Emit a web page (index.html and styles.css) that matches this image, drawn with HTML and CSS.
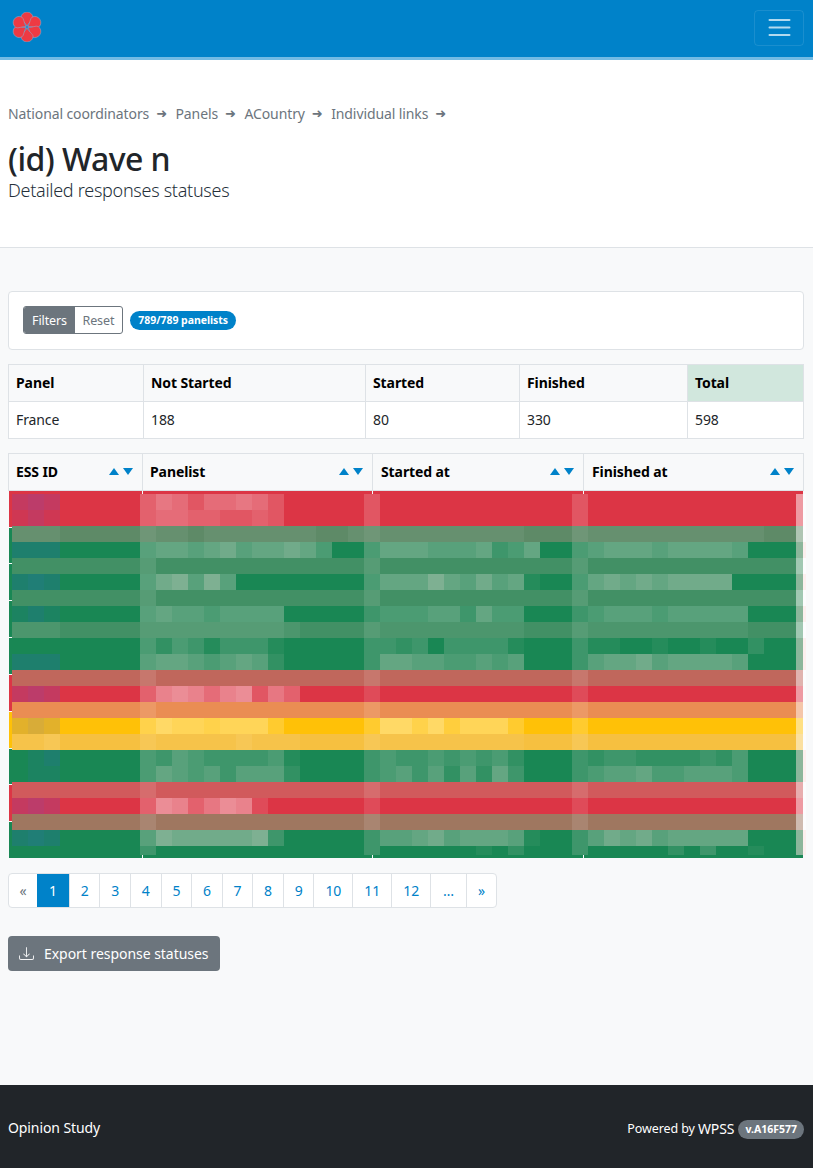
FILE: index.html
```html
<!DOCTYPE html>
<html lang="en">
<head>
<meta charset="utf-8">
<title>Detailed responses statuses</title>
<link rel="stylesheet" href="styles.css">
</head>
<body>
<nav class="navbar">
  <svg class="logo" viewBox="-16 -16 32 32" width="30" height="30" aria-hidden="true">
    <g class="petals">
      <path id="p" d="M0 -1C-2 -5 -6.4 -7.5 -6.4 -10A6.4 6 0 0 1 6.4 -10C6.4 -7.5 2 -5 0 -1Z"/>
      <use href="#p" transform="rotate(60)"/>
      <use href="#p" transform="rotate(120)"/>
      <use href="#p" transform="rotate(180)"/>
      <use href="#p" transform="rotate(240)"/>
      <use href="#p" transform="rotate(300)"/>
    </g>
  </svg>
  <button class="toggler" aria-label="Menu">
    <svg viewBox="0 0 30 30" width="30" height="30" aria-hidden="true"><path d="M5.5 7h20M5.5 14.5h20M5.5 22h20"/></svg>
  </button>
</nav>

<header class="hero">
  <ol class="crumbs">
    <li>National coordinators</li>
    <li>Panels</li>
    <li>ACountry</li>
    <li>Individual links</li>
  </ol>
  <h1>(id) Wave n</h1>
  <p class="sub">Detailed responses statuses</p>
</header>

<main class="content">
  <section class="card">
    <div class="btn-group"><span class="seg seg-on">Filters</span><span class="seg seg-off">Reset</span></div>
    <span class="pill">789/789 panelists</span>
  </section>

  <table class="grid summary">
    <thead>
      <tr><th class="s1">Panel</th><th class="s2">Not Started</th><th class="s3">Started</th><th class="s4">Finished</th><th class="total">Total</th></tr>
    </thead>
    <tbody>
      <tr><td>France</td><td>188</td><td>80</td><td>330</td><td>598</td></tr>
    </tbody>
  </table>

  <div class="results">
    <table class="grid head">
      <thead>
        <tr>
          <th class="c1"><div class="th"><span>ESS ID</span><span class="sort"><i class="up"></i><i class="down"></i></span></div></th>
          <th class="c2"><div class="th"><span>Panelist</span><span class="sort"><i class="up"></i><i class="down"></i></span></div></th>
          <th class="c3"><div class="th"><span>Started at</span><span class="sort"><i class="up"></i><i class="down"></i></span></div></th>
          <th class="c4"><div class="th"><span>Finished at</span><span class="sort"><i class="up"></i><i class="down"></i></span></div></th>
        </tr>
      </thead>
    </table>
    <div id="mosaic" class="mosaic"></div>
  </div>

  <ul class="pager">
    <li class="first">«</li><li class="on">1</li><li>2</li><li>3</li><li>4</li><li>5</li><li>6</li><li>7</li><li>8</li><li>9</li><li class="wide">10</li><li class="wide">11</li><li class="wide">12</li><li class="more">…</li><li class="last">»</li>
  </ul>

  <button class="export">
    <svg viewBox="0 0 16 16" width="15" height="15" aria-hidden="true">
      <path d="M.5 9.9a.5.5 0 0 1 .5.5v2.5a1 1 0 0 0 1 1h12a1 1 0 0 0 1-1v-2.5a.5.5 0 0 1 1 0v2.5a2 2 0 0 1-2 2H2a2 2 0 0 1-2-2v-2.5a.5.5 0 0 1 .5-.5z"/>
      <path d="M7.646 11.854a.5.5 0 0 0 .708 0l3-3a.5.5 0 0 0-.708-.708L8.5 10.293V1.5a.5.5 0 0 0-1 0v8.793L5.354 8.146a.5.5 0 1 0-.708.708l3 3z"/>
    </svg>
    Export response statuses
  </button>
</main>

<footer class="footer">
  <span class="brand">Opinion Study</span>
  <span class="powered">Powered by <span class="wpss">WPSS</span><span class="version">v.A16F577</span></span>
</footer>
<script src="mosaic.js"></script>
</body>
</html>
```
FILE: styles.css
```css
* { box-sizing: border-box; }
html, body { margin: 0; padding: 0; }
body {
  min-height: 1168px;
  display: flex;
  flex-direction: column;
  background: #f8f9fa;
  color: #212529;
  font: 14px/20px "Noto Sans", sans-serif;
  letter-spacing: -0.1px;
}
.navbar {
  height: 60px;
  background: #0082c9;
  border-bottom: 3px solid #72bbe4;
  padding: 10px 9px 0 12px;
  display: flex;
  justify-content: space-between;
  align-items: flex-start;
}
.logo { display: block; margin-top: 2px; }
.petals path, .petals use { fill: #ee3a43; stroke: #8fb4d6; stroke-width: .5; }
.toggler {
  width: 50px; height: 36px; padding: 2px 9px;
  background: none;
  border: 1px solid rgba(255,255,255,.1);
  border-radius: 4px;
  display: block;
}
.toggler svg { display: block; }
.toggler path { stroke: rgba(255,255,255,.7); stroke-width: 2; stroke-linecap: round; fill: none; }

.hero {
  height: 188px;
  background: #fff;
  border-bottom: 1px solid #dee2e6;
  padding: 44px 8px 0;
}
.crumbs {
  list-style: none; margin: 0; padding: 0;
  display: flex;
  color: #6c757d;
  height: 20px;
}
.crumbs li { display: flex; }
.crumbs li::after {
  content: "➜";
  font-family: "DejaVu Sans", sans-serif;
  font-size: 13px;
  color: #6c757d;
  margin: 0 8.5px 0 7px;
}
h1 {
  margin: 16px 0 0;
  font-size: 32px;
  line-height: 38px;
  font-weight: 550;
  letter-spacing: -0.55px;
}
.sub {
  margin: 1px 0 0;
  font-size: 18px;
  line-height: 23px;
  font-weight: 300;
  color: #25303a;
  letter-spacing: -0.28px;
}

.content { flex: 1; padding: 43px 9px 0 8px; }
.card {
  height: 59px;
  background: #fff;
  border: 1px solid #dee2e6;
  border-radius: 4px;
  padding: 14px;
  display: flex;
  align-items: flex-start;
  gap: 7px;
  margin-bottom: 14px;
}
.btn-group {
  display: flex;
  height: 28px;
  border: 1px solid #6c757d;
  border-radius: 3px;
  overflow: hidden;
  font-size: 12.5px;
  line-height: 27px;
  color: #6c757d;
  background: #fff;
}
.seg { padding: 0 8px; }
.seg-on { background: #6c757d; color: #fff; }
.seg-off { padding: 0 8px 0 7.5px; }
.pill {
  height: 19px;
  margin-top: 5px;
  padding: 0 8px;
  border-radius: 10px;
  background: #0082c9;
  color: #fff;
  font-size: 10.5px;
  line-height: 18px;
  font-weight: 700;
  white-space: nowrap;
  letter-spacing: -0.05px;
}

.grid { border-collapse: collapse; table-layout: fixed; width: 796px; }
.grid th, .grid td {
  border: 1px solid #dee2e6;
  padding: 8px 7px;
  text-align: left;
  height: 36px;
  font-weight: 400;
}
.grid th { background: #f8f9fa; font-weight: 700; color: #000; }
.grid td { background: #fff; }
.summary { margin-bottom: 14px; }
.s1 { width: 135px; }
.s2 { width: 222px; }
.s3 { width: 154px; }
.s4 { width: 168px; }
.grid th.total { background: #d1e7dd; }
.c1 { width: 134px; }
.c2 { width: 230px; }
.c3 { width: 211px; }
.grid.head th { height: 37px; padding-top: 7px; padding-bottom: 8px; }
.grid.head .c3, .grid.head .c4 { padding-left: 8px; }
.th { display: flex; justify-content: space-between; align-items: center; }
.sort { display: flex; gap: 4px; margin-right: 2px; }
.sort i { width: 0; height: 0; border-left: 5.5px solid transparent; border-right: 5.5px solid transparent; }
.sort .up { border-bottom: 7px solid #0082c9; }
.sort .down { border-top: 7px solid #0082c9; }
.results { width: 796px; }
.mosaic { height: 367px; margin-left: 1px; }
.mosaic svg { display: block; overflow: visible; }

.pager {
  list-style: none;
  margin: 15px 0 0;
  padding: 0;
  display: flex;
  width: 489px;
  height: 35px;
  background: #fff;
  border: 1px solid #dee2e6;
  border-radius: 4px;
  color: #0082c9;
}
.pager li {
  width: 30.625px;
  padding: 7px 0 0;
  border-left: 1px solid #dee2e6;
  text-align: center;
}
.pager .first { width: 28px; border-left: 0; color: #6c757d; }
.pager .on { width: 32px; background: #0082c9; color: #fff; border-left: 0; }
.pager .wide { width: 39px; }
.pager .more { width: 36px; }
.pager .last { width: 30px; }
.export {
  display: flex;
  align-items: center;
  gap: 10px;
  margin-top: 28px;
  height: 35px;
  width: 212px;
  padding: 0 10px 0 11px;
  background: #6c757d;
  color: #fff;
  border: 0;
  border-radius: 4px;
  font: inherit;
  letter-spacing: -0.04px;
}
.export svg { fill: #f3f4f5; flex: none; }

.footer {
  height: 83px;
  background: #212529;
  color: #fff;
  padding: 3px 9px 0 8px;
  display: flex;
  justify-content: space-between;
  align-items: center;
}
.powered { margin-top: 2px; font-size: 12.5px; display: flex; align-items: center; white-space: pre; }
.wpss { font-size: 14px; }
.version {
  height: 19px;
  margin-left: 4px;
  padding: 0 7px;
  border-radius: 10px;
  background: #6c757d;
  font-size: 10.5px;
  line-height: 19px;
  font-weight: 700;
  letter-spacing: 0;
}
```
FILE: mosaic.js
```js
// Pixelated table body: each band is 16px tall, each tile 16px wide.
// Digits are a pale veil (d x 5.5%); a, b, c are a blue veil over the ID column; x is a 50% veil.
var GREEN = "#198754", RED = "#dc3545", YELLOW = "#ffc107";
var bands = [
  [RED,       "bcb00000", "46535565300000", "3000000000000", "30000000000000x"],
  [RED,       "aba00000", "45544334300000", "3000000000000", "30000000000000x"],
  ["#5e8a67", "11100000", "21101111111001", "2111111111000", "21111111111100x"],
  [GREEN,     "bbb00000", "56656756676400", "4666555634600", "45666566665000x"],
  ["#429065", "00000000", "20000000000000", "2000000000000", "20000000000000x"],
  [GREEN,     "bcb00000", "57858500000000", "4666865756100", "46767677770000x"],
  ["#429065", "00000000", "20000000000000", "2000000000000", "20000000000000x"],
  [GREEN,     "aba00000", "56554555500000", "3444553644000", "34555455555000x"],
  ["#429065", "11100000", "22222222210000", "2111111111000", "21111111111000x"],
  [GREEN,     "00000000", "42431333100000", "3323033331000", "31100100100200x"],
  [GREEN,     "bbb00000", "56654565200000", "3665544545000", "35667566665000x"],
  ["#c0675c", "00000000", "20000000000000", "2000000000000", "20000000000000x"],
  [RED,       "bcb00000", "47875783640000", "2000000000000", "20000000000000x"],
  ["#ea8d53", "00000000", "20000000000000", "2000000000000", "20000000000000x"],
  [YELLOW,    "bcb00000", "57665666300000", "3775746663000", "30000000000000x"],
  ["#f6c040", "11200000", "21111121110000", "2111111111000", "20000000000000x"],
  [GREEN,     "0ab00000", "43543333410000", "3433434342000", "32332222324000x"],
  [GREEN,     "0aa00000", "46545355520000", "3453525263000", "34556445554000x"],
  ["#d15a5c", "00000000", "20000000000000", "2000000000000", "20000000000000x"],
  [RED,       "bcb00000", "48746872000000", "2000000000000", "20000000000000x"],
  ["#9f7760", "00000000", "20000000000000", "2000000000000", "20000000000000x"],
  [GREEN,     "bcb00000", "58777778300000", "3556756665100", "35767566666000x"],
  [GREEN,     "00000000", "30000000000000", "3000000102000", "30000020300100x"]
];

var NS = "http://www.w3.org/2000/svg";
var svg = document.createElementNS(NS, "svg");
svg.setAttribute("width", "797");
svg.setAttribute("height", "367");
svg.setAttribute("shape-rendering", "crispEdges");

function rect(x, y, w, h, fill, opacity) {
  var r = document.createElementNS(NS, "rect");
  r.setAttribute("x", x); r.setAttribute("y", y);
  r.setAttribute("width", w); r.setAttribute("height", h);
  r.setAttribute("fill", fill);
  if (opacity !== undefined) r.setAttribute("fill-opacity", opacity);
  svg.appendChild(r);
}

var X0 = 3, Y0 = 3, TILE = 16;

// raw rows showing round the mosaic
[[0, 36, RED], [36, 147, GREEN], [183, 37, RED], [220, 37, YELLOW], [257, 36, GREEN], [293, 37, RED], [330, 37, GREEN]]
  .forEach(function (r) { rect(0, r[0], 794, r[1], r[2]); });
[36, 72, 109, 146, 183, 220, 257, 293, 330].forEach(function (y) { rect(0, y, 3, 1, "#f8f9fa"); });
[133, 363, 574].forEach(function (x) {
  rect(x, 0, 1, 3, "#f8f9fa");
  rect(x, 364, 1, 3, "#f8f9fa");
});

var blue = { a: 0.08, b: 0.15, c: 0.2 };
bands.forEach(function (b, row) {
  var y = Y0 + row * TILE;
  var h = row === bands.length - 1 ? 9 : TILE;
  rect(X0, y, 791, h, b[0]);
  var veil = b[0] === GREEN ? "#ffe6e2" : "#ffffff";
  (b[1] + b[2] + b[3] + b[4]).split("").forEach(function (ch, k) {
    var x = X0 + k * TILE;
    var w = x + TILE > 797 ? 797 - x : TILE;
    if (blue[ch]) rect(x, y, w, h, "#3c5aff", blue[ch]);
    else if (ch === "x") rect(x, y, w, h, veil, 0.5);
    else if (ch !== "0") rect(x, y, w, h, veil, Number(ch) * 0.055);
  });
});

document.getElementById("mosaic").appendChild(svg);
```
